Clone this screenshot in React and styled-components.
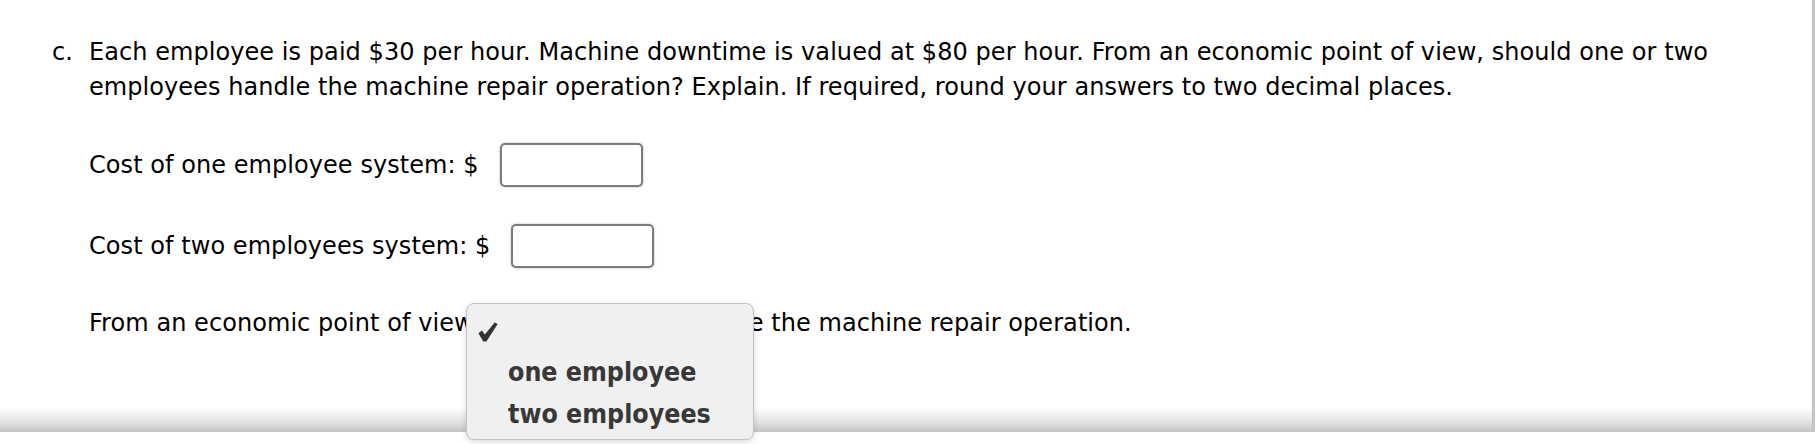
import React from "react";
import styled, { createGlobalStyle } from "styled-components";

const GlobalStyle = createGlobalStyle`
  html, body {
    margin: 0;
    padding: 0;
    background: #ffffff;
  }
  body {
    min-height: 444px;
    font-family: "DejaVu Sans", Verdana, sans-serif;
    color: #000;
  }
`;

const Panel = styled.div`
  position: relative;
  box-sizing: border-box;
  width: 1815px;
  height: 432px;
  padding: 35px 40px 0 52px;
  border-right: 3px solid #c4c4c4;
  background: linear-gradient(
    to bottom,
    #ffffff 0,
    #ffffff calc(100% - 24px),
    #e2e2e2 calc(100% - 10px),
    #c4c4c4 100%
  );
`;

const Question = styled.div`
  display: flex;
  align-items: flex-start;
  font-size: 24px;
  line-height: 35px;
  letter-spacing: 0.06px;
`;

const Marker = styled.div`
  flex: 0 0 37px;
`;

const Body = styled.div`
  flex: 1;
  display: flex;
  flex-direction: column;
`;

const Prompt = styled.p`
  margin: 0;
`;

const FieldRow = styled.div`
  position: relative;
  display: flex;
  align-items: center;
  min-height: 44px;
  margin-top: ${(p) => p.$mt}px;
  white-space: pre;
`;

const AmountInput = styled.input`
  box-sizing: border-box;
  width: 143px;
  height: 44px;
  margin: 0 0 0 21px;
  padding: 0 8px;
  border: 2px solid #7b7b7b;
  border-radius: 5px;
  background: #fff;
  box-shadow: 0 0 2px 1px rgba(0, 0, 0, 0.12);
  font: inherit;
  outline: none;
`;

const HiddenSelect = styled.select`
  box-sizing: border-box;
  width: 97px;
  height: 36px;
  margin: 0;
  border: 1px solid #999;
  border-radius: 4px;
  background: #fff;
  font: inherit;
  font-size: 18px;
`;

const Menu = styled.div`
  position: absolute;
  left: 377px;
  top: 2px;
  z-index: 2;
  box-sizing: border-box;
  width: 288px;
  height: 137px;
  padding: 3px 0 6px;
  background: #f0f0f0;
  border: 1px solid #c2c2c2;
  border-radius: 8px;
  box-shadow: 0 2px 6px rgba(0, 0, 0, 0.14);
  font-family: "DejaVu Sans Condensed", "DejaVu Sans", sans-serif;
  font-stretch: semi-condensed;
  font-weight: bold;
  font-size: 26.5px;
  letter-spacing: 0;
  color: #383838;
  white-space: nowrap;
`;

const MenuRow = styled.div`
  display: grid;
  grid-template-columns: 41px 1fr;
  align-items: center;
  height: ${(p) => p.$h}px;
  line-height: ${(p) => p.$h}px;
`;

const CheckCell = styled.span`
  display: flex;
  align-items: center;
  padding-left: 11px;
  height: 100%;
  padding-top: 5px;
  box-sizing: border-box;
`;

function CheckIcon() {
  return (
    <svg width="20" height="20" viewBox="0 0 20 20" aria-hidden="true">
      <path
        d="M0.4 11.2 L3.9 8.6 L6.9 12.4 L16.6 0.4 L19.7 1.9 L8.4 19.5 L5.3 19.5 Z"
        fill="#333333"
      />
    </svg>
  );
}

export default function App() {
  return (
    <>
      <GlobalStyle />
      <Panel>
        <Question>
          <Marker>c.</Marker>
          <Body>
            <Prompt>
              Each employee is paid $30 per hour. Machine downtime is valued at
              $80 per hour. From an economic point of view, should one or two
              employees handle the machine repair operation? Explain. If
              required, round your answers to two decimal places.
            </Prompt>
            <FieldRow $mt={38}>
              <span>Cost of one employee system: $</span>
              <AmountInput type="text" aria-label="Cost of one employee system" />
            </FieldRow>
            <FieldRow $mt={37}>
              <span>Cost of two employees system: $</span>
              <AmountInput type="text" aria-label="Cost of two employees system" />
            </FieldRow>
            <FieldRow $mt={33}>
              <span>From an economic point of view, </span>
              <HiddenSelect defaultValue="">
                <option value=""></option>
                <option value="one">one employee</option>
                <option value="two">two employees</option>
              </HiddenSelect>
              <span> should handle the machine repair operation.</span>
              <Menu role="listbox">
                <MenuRow $h={44}>
                  <CheckCell>
                    <CheckIcon />
                  </CheckCell>
                  <span />
                </MenuRow>
                <MenuRow $h={42}>
                  <span />
                  <span>one employee</span>
                </MenuRow>
                <MenuRow $h={42}>
                  <span />
                  <span>two employees</span>
                </MenuRow>
              </Menu>
            </FieldRow>
          </Body>
        </Question>
      </Panel>
    </>
  );
}
